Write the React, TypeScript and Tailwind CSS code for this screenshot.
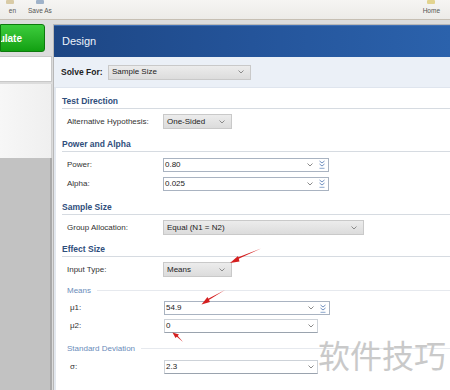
import type { ReactNode } from "react"

// ---------- small bits ----------
function Chevron() {
  return (
    <svg width="6" height="4" viewBox="0 0 6 4" className="shrink-0">
      <path d="M0.5 0.5 L3 3 L5.5 0.5" fill="none" stroke="#8a8a8a" strokeWidth="1" />
    </svg>
  )
}

function Spin() {
  return (
    <svg width="6" height="9" viewBox="0 0 6 9" className="shrink-0">
      <path d="M0.5 1 L3 3 L5.5 1" fill="none" stroke="#6f8fbf" strokeWidth="1" />
      <path d="M0.5 4 L3 6 L5.5 4" fill="none" stroke="#6f8fbf" strokeWidth="1" />
      <path d="M0.5 8.3 H5.5" stroke="#6f8fbf" strokeWidth="0.8" />
    </svg>
  )
}

function Select({ value, w }: { value: string; w: string }) {
  return (
    <div
      className={`${w} h-[15px] flex items-center justify-between pl-[3px] pr-[6px] border border-[#c9c9c9] bg-gradient-to-b from-[#ececec] to-[#dcdcdc] text-[#222]`}
    >
      <span>{value}</span>
      <Chevron />
    </div>
  )
}

function Field({ value, spin = true }: { value: string; spin?: boolean }) {
  if (!spin)
    return (
      <div className="w-[154px] h-[14px] flex items-center justify-between pl-[1px] pr-[3px] border border-[#cdd2d8] border-b-[#9aa3ae] bg-white text-[#222]">
        <span>{value}</span>
        <Chevron />
      </div>
    )
  return (
    <div className="w-[166px] h-[14px] flex items-center pl-[1px] pr-[3px] border border-[#a9b3c1] bg-white text-[#222]">
      <span className="flex-1">{value}</span>
      <Chevron />
      <div className="w-[6px]" />
      <Spin />
    </div>
  )
}

function Title({ children, mt }: { children: ReactNode; mt: string }) {
  return (
    <div className={`${mt} h-[14px] flex items-center border-b border-[#d6dbe1] font-bold text-[8.5px] text-[#2f4e7c]`}>
      {children}
    </div>
  )
}

function Sub({ children, mt }: { children: ReactNode; mt: string }) {
  return (
    <div className={`${mt} h-[13px] flex items-center gap-[6px] pl-[5px] text-[8px] text-[#6a8cba]`}>
      <span>{children}</span>
      <div className="flex-1 h-px bg-[#e6e9ee]" />
    </div>
  )
}

function Row({ label, children, mt, h = "h-[19px]", pl = "pl-[5px]" }: { label: string; children: ReactNode; mt: string; h?: string; pl?: string }) {
  return (
    <div className={`${mt} ${h} flex items-center ${pl}`}>
      <div className={`${pl === "pl-[5px]" ? "w-[96px]" : "w-[94px]"} text-[#333]`}>{label}</div>
      {children}
    </div>
  )
}

// ---------- page ----------
export default function App() {
  return (
    <div className="relative w-[450px] h-[390px] overflow-hidden bg-[#dcdcdc] font-['Liberation_Sans',Arial,sans-serif] text-[8px]">
      {/* toolbar */}
      <div className="h-[20px] bg-gradient-to-b from-[#f6f5f3] to-[#ecebe8] border-b border-[#c6bfb3] flex items-end pb-[3px] text-[6.5px] text-[#555]">
        <div className="w-[14px] flex flex-col items-end">
          <div className="w-[8px] h-[4px] mb-[2px] bg-[#d9cba6] rounded-[1px]" />
          <span className="-mr-[2px]">en</span>
        </div>
        <div className="ml-[14px] flex flex-col items-center">
          <div className="w-[8px] h-[4px] mb-[2px] bg-[#9fb2c9] rounded-[1px]" />
          <span>Save As</span>
        </div>
        <div className="ml-auto mr-[10px] flex flex-col items-center">
          <div className="w-[8px] h-[4px] mb-[2px] bg-[#e3d48f] rounded-[1px]" />
          <span>Home</span>
        </div>
      </div>

      <div className="flex h-[370px] pt-[4px]">
        {/* left column */}
        <div className="w-[52px] flex flex-col">
          <div className="w-[45px] h-[28px] rounded-r-[3px] border border-[#0d7a0d] bg-gradient-to-b from-[#3ccd3c] to-[#10a010] flex items-center justify-end pr-[22px] overflow-hidden whitespace-nowrap">
            <span className="text-[10px] font-bold text-white">Calculate</span>
          </div>
          <div className="mt-[4px] h-[26px] bg-white border border-[#c8c8c8] border-l-0" />
          <div className="mt-[2px] h-[74px] bg-gradient-to-r from-[#f7f7f7] to-[#efefef] border-r border-[#cfcfcf]" />
          <div className="flex-1 bg-[#c2c2c2] border-r-2 border-[#a9a9a9]" />
        </div>

        {/* right panel */}
        <div className="flex-1 flex flex-col ml-[1px] border-l border-t border-[#b8b8b8]">
          <div className="h-[32px] bg-gradient-to-r from-[#1d4684] via-[#24549a] to-[#2b62ac] border-t border-[#3f6fb4] flex items-center pl-[8px]">
            <span className="text-[11px] text-[#eef3fb]">Design</span>
          </div>
          <div className="h-[31px] bg-[#ebf0f7] flex items-center pl-[7px] border-b border-[#dfe5ee]">
            <span className="w-[47px] font-bold text-[8.5px] text-[#222]">Solve For:</span>
            <Select value="Sample Size" w="w-[143px]" />
          </div>
          <div className="flex-1 bg-white border-l-2 border-[#e3e8ef] pl-[6px] flex flex-col">
            <Title mt="mt-[7px]">Test Direction</Title>
            <Row label="Alternative Hypothesis:" mt="mt-[3px]">
              <Select value="One-Sided" w="w-[69px]" />
            </Row>
            <Title mt="mt-[7px]">Power and Alpha</Title>
            <Row label="Power:" mt="mt-[3px]">
              <Field value="0.80" />
            </Row>
            <Row label="Alpha:" mt="mt-0">
              <Field value="0.025" />
            </Row>
            <Title mt="mt-[8px]">Sample Size</Title>
            <Row label="Group Allocation:" mt="mt-[3px]">
              <Select value="Equal (N1 = N2)" w="w-[201px]" />
            </Row>
            <Title mt="mt-[6px]">Effect Size</Title>
            <Row label="Input Type:" mt="mt-[3px]">
              <Select value="Means" w="w-[69px]" />
            </Row>
            <Sub mt="mt-[5px]">Means</Sub>
            <Row label="μ1:" mt="mt-[2px]" h="h-[18px]" pl="pl-[8px]">
              <Field value="54.9" />
            </Row>
            <Row label="μ2:" mt="mt-0" h="h-[18px]" pl="pl-[8px]">
              <Field value="0" spin={false} />
            </Row>
            <Sub mt="mt-[7px]">Standard Deviation</Sub>
            <Row label="σ:" mt="mt-[3px]" h="h-[18px]" pl="pl-[8px]">
              <Field value="2.3" spin={false} />
            </Row>
          </div>
        </div>
      </div>

      {/* red annotation arrows */}
      <svg className="absolute inset-0 pointer-events-none" width="450" height="390" viewBox="0 0 450 390">
        <g fill="#d41e1e">
          <path d="M261 248.5 L237 259.5 L236.3 258 Z" />
          <path d="M230 263 L238 256 L239.5 261.5 Z" />
          <path d="M225 290 L208 300.5 L207.2 299.2 Z" />
          <path d="M201.5 304.5 L207.5 297 L210 302 Z" />
          <path d="M183 342 L176 336 L177 335 Z" />
          <path d="M172.5 332.5 L179 334.5 L175.5 338 Z" />
        </g>
      </svg>

      {/* watermark */}
      <div className="absolute left-[318px] top-[338px] text-[32px] leading-none text-[#c9c9c9] font-['Noto_Sans_CJK_SC',sans-serif]">
        软件技巧
      </div>
    </div>
  )
}
